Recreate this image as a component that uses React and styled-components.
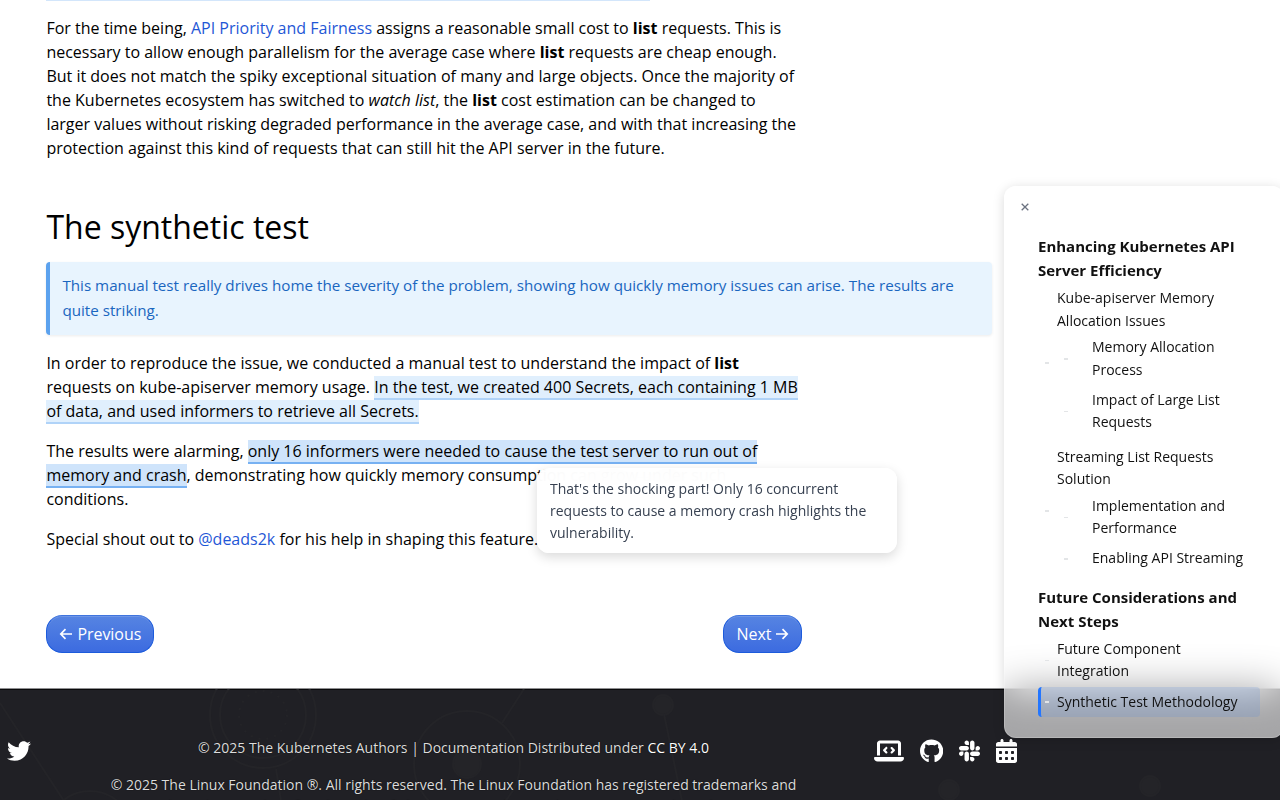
import React from 'react';
import styled, { createGlobalStyle, css } from 'styled-components';
import { FaTwitter, FaLaptopCode, FaGithub, FaSlack, FaCalendarDays } from 'react-icons/fa6';

const GlobalStyle = createGlobalStyle`
  * { box-sizing: border-box; }
  html, body { margin: 0; height: 100%; overflow: hidden; background: #fff; }
  body {
    font-family: 'Open Sans', 'Noto Sans', sans-serif;
    font-size: 16px;
    line-height: 24px;
    color: #000;
  }
  p { margin: 0 0 16px; }
  a { color: #1f57d6; text-decoration: none; }
`;

const Page = styled.div`
  position: relative;
  height: 800px;
  overflow: hidden;
  display: flex;
  flex-direction: column;
`;

const Article = styled.main`
  flex: none;
  width: 992px;
  height: 688px;
  padding-left: 46.4px;
`;

const HighlightEdge = styled.div`
  width: 604px;
  height: 1px;
  background: #d3e6fb;
  margin-bottom: 15px;
`;

const Paragraph = styled.p`
  max-width: 756px;
`;

const Title = styled.h2`
  margin: 48px 0 16px;
  font-size: 32px;
  font-weight: 400;
  line-height: 38px;
`;

const Callout = styled.aside`
  height: 73px;
  margin-bottom: 16px;
  padding: 11.4px 12px;
  border-left: 4px solid #5ca2ee;
  border-radius: 4px;
  background: #e8f4fe;
  box-shadow: 0 1px 3px rgba(0, 0, 0, 0.08);
  color: #1a66c0;
  font-size: 15.2px;
  line-height: 24.32px;
`;

const Mark = styled.span`
  background: ${(p) => (p.$strong ? '#cfe4fb' : '#e0effd')};
  border-bottom: 2px solid ${(p) => (p.$strong ? '#77b1f2' : '#b0d3f8')};
`;

const Pager = styled.nav`
  display: flex;
  justify-content: space-between;
  width: 756px;
  margin-top: 63.6px;
`;

const PagerButton = styled.button`
  display: flex;
  align-items: center;
  gap: 4px;
  height: 38px;
  padding: 0 12px;
  border: 1px solid #1c5bdc;
  border-top-color: #3f74de;
  border-radius: 16px;
  background: linear-gradient(#5684e2, #3c6be0);
  box-shadow: inset 0 1px 0 rgba(255, 255, 255, 0.15);
  color: #fff;
  font: inherit;
  font-weight: 500;
  letter-spacing: -0.05px;
`;

const Footer = styled.footer`
  position: relative;
  flex: 1;
  display: grid;
  grid-template-columns: 96px 715px 1fr;
  padding-top: 46px;
  border-top: 1px solid #8f8f91;
  background: #202025;
  box-shadow: inset 0 1px 0 #08080a;
  color: #dcdcdc;
  font-size: 14px;
  overflow: hidden;
`;

const Backdrop = styled.svg`
  position: absolute;
  inset: 0;
  fill: none;
  stroke: #242428;
  stroke-width: 2;
`;

const FooterSide = styled.div`
  position: relative;
  display: flex;
  align-items: flex-start;
  gap: 16px;
  padding-left: ${(p) => p.$inset}px;
  padding-top: 3.5px;
  color: #fff;
  svg { font-size: 24px; }
  svg.wide { width: 30px; }
  svg.round { width: 23.25px; }
  svg.narrow { width: 21px; }
`;

const Legal = styled.div`
  position: relative;
  padding-top: 2px;
  text-align: center;
  line-height: 21px;
  text-shadow: 0 0 1px #000;
  a { color: #fff; }
`;

const Tooltip = styled.div`
  position: absolute;
  left: 537px;
  top: 468px;
  width: 360px;
  height: 85px;
  padding: 9.6px 13px 8px;
  border-radius: 12px;
  background: rgba(255, 255, 255, 0.96);
  backdrop-filter: blur(12px);
  box-shadow: 0 4px 12px rgba(0, 0, 0, 0.15);
  color: #374151;
  font-size: 14px;
  line-height: 22.4px;
`;

const Panel = styled.aside`
  position: absolute;
  left: 1004px;
  top: 186px;
  width: 280px;
  height: 552px;
  padding: 10px 24px 0 34px;
  border-radius: 12px;
  background: rgba(255, 255, 255, 0.6);
  backdrop-filter: blur(20px);
  box-shadow: 0 2px 12px rgba(0, 0, 0, 0.15), inset 0 0 0 1px rgba(255, 255, 255, 0.2);
  color: #111;
  font-size: 14px;
  line-height: 22.4px;
`;

const Close = styled.button`
  display: flex;
  justify-content: center;
  align-items: center;
  width: 22px;
  height: 22px;
  margin: 0 0 16.4px -24px;
  padding: 0;
  border: 0;
  background: none;
  color: #6b7280;
  svg { width: 8px; height: 8px; stroke: currentColor; stroke-width: 1.3; }
`;

const Section = styled.h3`
  margin: ${(p) => p.$top || 0}px 0 0;
  font-size: 15px;
  font-weight: 700;
  line-height: 24px;
`;

const Entry = styled.div`
  position: relative;
  width: 222px;
  margin-top: ${(p) => p.$top}px;
  padding-left: ${(p) => (p.$deep ? 54 : 19)}px;
  padding-right: 12px;
  ${(p) => p.$active && css`
    padding-top: 3.5px;
    padding-bottom: 3.5px;
    border-left: 3px solid #2376ff;
    border-radius: 4px;
    padding-left: 16px;
    background: rgba(90, 140, 220, 0.2);
  `}
`;

const Dash = styled.i`
  position: absolute;
  left: ${(p) => p.$x}px;
  top: ${(p) => p.$y}px;
  width: 4px;
  height: ${(p) => p.$h || 1}px;
  background: #e3e5e7;
`;

function Arrow({ back }) {
  return (
    <svg width="14" height="14" viewBox="0 0 14 14" fill="none" stroke="currentColor" strokeWidth="1.7">
      <path d={back ? 'M13 7H2M6.5 2.2 1.8 7l4.7 4.8' : 'M1 7h11M7.5 2.2 12.2 7l-4.7 4.8'} />
    </svg>
  );
}

export default function App() {
  return (
    <>
      <GlobalStyle />
      <Page>
        <Article>
          <HighlightEdge />
          <Paragraph>
            For the time being, <a href="#apf">API Priority and Fairness</a> assigns a reasonable small cost to{' '}
            <b>list</b> requests. This is necessary to allow enough parallelism for the average case where{' '}
            <b>list</b> requests are cheap enough. But it does not match the spiky exceptional situation of many and
            large objects. Once the majority of the Kubernetes ecosystem has switched to <em>watch list</em>, the{' '}
            <b>list</b> cost estimation can be changed to larger values without risking degraded performance in the
            average case, and with that increasing the protection against this kind of requests that can still hit the
            API server in the future.
          </Paragraph>
          <Title>The synthetic test</Title>
          <Callout>
            This manual test really drives home the severity of the problem, showing how quickly memory issues can
            arise. The results are quite striking.
          </Callout>
          <Paragraph>
            In order to reproduce the issue, we conducted a manual test to understand the impact of <b>list</b>{' '}
            requests on kube-apiserver memory usage.{' '}
            <Mark>
              In the test, we created 400 Secrets, each containing 1 MB of data, and used informers to retrieve all
              Secrets.
            </Mark>
          </Paragraph>
          <Paragraph>
            The results were alarming,{' '}
            <Mark $strong>only 16 informers were needed to cause the test server to run out of memory and crash</Mark>,
            demonstrating how quickly memory consumption can grow under such conditions.
          </Paragraph>
          <Paragraph>
            Special shout out to <a href="#deads2k">@deads2k</a> for his help in shaping this feature.
          </Paragraph>
          <Pager>
            <PagerButton><Arrow back />Previous</PagerButton>
            <PagerButton>Next<Arrow /></PagerButton>
          </Pager>
        </Article>
        <Footer>
          <Backdrop width="1280" height="112" viewBox="0 688 1280 112">
            <circle cx="263" cy="714" r="53" />
            <circle cx="263" cy="714" r="43" />
            <circle cx="263" cy="714" r="24" strokeDasharray="2 6" />
            <circle cx="467" cy="763" r="53" />
            <circle cx="467" cy="763" r="14" fill="#242428" />
            <circle cx="663" cy="704" r="10" fill="#242428" />
            <circle cx="949" cy="789" r="10" fill="#242428" />
            <circle cx="1150" cy="785" r="10" fill="#242428" />
            <circle cx="90" cy="832" r="42" />
            <path d="M0 702 64 800M276 768l5 32M502 722l22-34M664 713l18 87" />
          </Backdrop>
          <FooterSide $inset={7}><FaTwitter /></FooterSide>
          <Legal>
            <p>
              © 2025 The Kubernetes Authors | Documentation Distributed under <a href="#cc">CC BY 4.0</a>
            </p>
            <p>
              © 2025 The Linux Foundation ®. All rights reserved. The Linux Foundation has registered trademarks and
              uses trademarks. For a list of trademarks of The Linux Foundation, please see our{' '}
              <a href="#tm">Trademark Usage page</a>
            </p>
          </Legal>
          <FooterSide $inset={63}>
            <FaLaptopCode className="wide" />
            <FaGithub className="round" />
            <FaSlack className="narrow" />
            <FaCalendarDays className="narrow" />
          </FooterSide>
        </Footer>
        <Tooltip>
          That's the shocking part! Only 16 concurrent requests to cause a memory crash highlights the vulnerability.
        </Tooltip>
        <Panel>
          <Close aria-label="Close">
            <svg viewBox="0 0 8 8"><path d="M.7.7l6.6 6.6M7.3.7.7 7.3" /></svg>
          </Close>
          <Section>Enhancing Kubernetes API Server Efficiency</Section>
          <Entry $top={5}><Dash $x={7} $y={75} $h={2} />Kube-apiserver Memory Allocation Issues</Entry>
          <Entry $top={4} $deep><Dash $x={26} $y={22} $h={2} />Memory Allocation Process</Entry>
          <Entry $top={8} $deep><Dash $x={26} $y={22} />Impact of Large List Requests</Entry>
          <Entry $top={12}><Dash $x={7} $y={64} $h={2} />Streaming List Requests Solution</Entry>
          <Entry $top={4} $deep><Dash $x={26} $y={22} />Implementation and Performance</Entry>
          <Entry $top={8} $deep><Dash $x={26} $y={11} $h={2} />Enabling API Streaming</Entry>
          <Section $top={15.5}>Future Considerations and Next Steps</Section>
          <Entry $top={4.5}><Dash $x={7} $y={22} />Future Component Integration</Entry>
          <Entry $top={4.5} $active><Dash $x={4} $y={14} $h={2} />Synthetic Test Methodology</Entry>
        </Panel>
      </Page>
    </>
  );
}
